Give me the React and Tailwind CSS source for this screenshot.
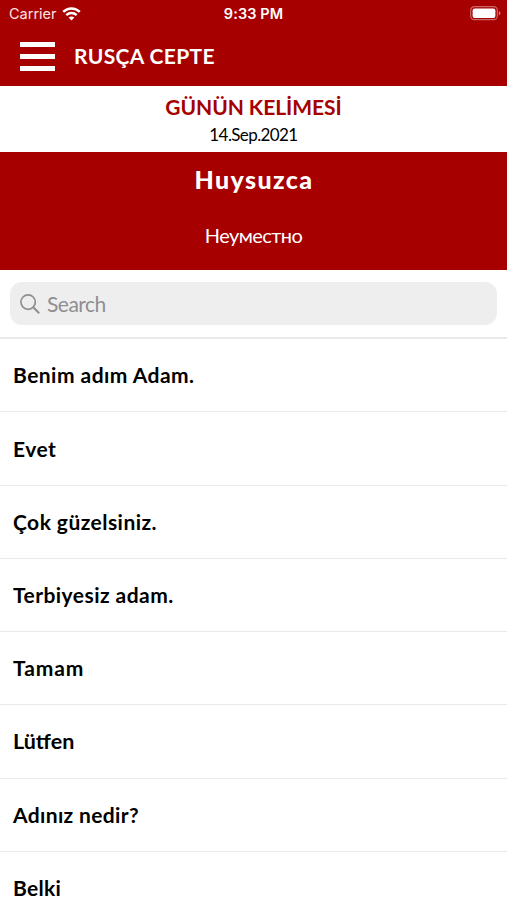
const phrases = [
  { text: "Benim adım Adam.", fit: "tracking-[0.46px]" },
  { text: "Evet", fit: "tracking-[0.5px]" },
  { text: "Çok güzelsiniz.", fit: "tracking-[0.45px]" },
  { text: "Terbiyesiz adam.", fit: "tracking-[0.45px]" },
  { text: "Tamam", fit: "tracking-[0.9px]" },
  { text: "Lütfen", fit: "text-[21.5px]" },
  { text: "Adınız nedir?", fit: "tracking-[0.35px]" },
  { text: "Belki", fit: "tracking-[0.3px]" },
];

function WifiIcon() {
  return (
    <svg width="19" height="14" viewBox="0 0 19 14" fill="none" stroke="#fff" strokeWidth="2.5">
      <path d="M1.2 4.9C5.9 .3 13.1 .3 17.8 4.9" />
      <path d="M4.3 8.1C7.3 5.3 11.7 5.3 14.7 8.1" />
      <path d="M9.5 13.6L6.6 10.6C8.2 9.1 10.8 9.1 12.4 10.6Z" fill="#fff" stroke="none" />
    </svg>
  );
}

function BatteryIcon() {
  return (
    <svg width="31" height="15" viewBox="0 0 31 15" fill="none">
      <rect x="0.7" y="0.7" width="26.6" height="13" rx="3.6" stroke="#fff" strokeOpacity=".4" strokeWidth="1.2" />
      <rect x="2.6" y="2.4" width="22.8" height="9.6" rx="2" fill="#fff" />
      <path d="M28.8 5c2.2 .8 2.2 3.6 0 4.4z" fill="#fff" fillOpacity=".5" />
    </svg>
  );
}

export default function App() {
  return (
    <div className="flex h-[900px] w-[507px] flex-col overflow-hidden bg-white font-['Lato',sans-serif] text-black">
      <header className="h-[86px] shrink-0 bg-[#a60000] text-white">
        <div className="grid h-[27px] grid-cols-3 items-center pl-[9px] pr-[6px] font-['Inter',sans-serif] text-[14.5px]">
          <div className="flex items-center gap-[5px]">
            <span className="text-[#ffe4e2]">Carrier</span>
            <WifiIcon />
          </div>
          <span className="pr-[3px] text-center font-semibold tracking-[0.1px]">9:33 PM</span>
          <div className="flex justify-end"><BatteryIcon /></div>
        </div>
        <div className="flex h-[58px] items-center pl-5">
          <div className="flex w-[35px] flex-col gap-[7px]">
            <i className="h-[5px] bg-white" />
            <i className="h-[5px] bg-white" />
            <i className="h-[5px] bg-white" />
          </div>
          <h1 className="ml-[19px] text-[21px] font-bold tracking-[0.35px]">RUSÇA CEPTE</h1>
        </div>
      </header>
      <section className="flex h-[66px] shrink-0 flex-col items-center pt-[8px]">
        <h2 className="text-[21px] font-bold leading-[26px] tracking-[-0.05px] text-[#a60000]">GÜNÜN KELİMESİ</h2>
        <p className="mt-px text-[17px] leading-[28px] tracking-[-0.6px]">14.Sep.2021</p>
      </section>
      <section className="flex h-[118px] shrink-0 flex-col items-center bg-[#a60000] pt-[11px] text-white">
        <p className="pl-px text-[25px] font-black leading-[32px] tracking-[1.4px]">Huysuzca</p>
        <p className="mt-[24px] text-[20px] leading-[32px] tracking-[-0.55px]">Неуместно</p>
      </section>
      <div className="h-[69px] shrink-0 border-b-2 border-[#eaeaea] px-[10px] pt-[12px]">
        <div className="flex h-[43px] items-center rounded-[12px] bg-[#eeeeee] pl-[10px] text-[#8e8e93]">
          <svg width="20" height="20" viewBox="0 0 20 20" fill="none" stroke="currentColor" strokeWidth="1.7">
            <circle cx="8.1" cy="8.1" r="7.2" />
            <path d="M13.2 13.2L19.2 19.2" strokeWidth="2" />
          </svg>
          <span className="ml-[7px] text-[21px] tracking-[-0.5px]">Search</span>
        </div>
      </div>
      <ul>
        {phrases.map(({ text, fit }) => (
          <li key={text} className="flex h-[73.27px] items-center border-b border-[#e9e9e9] pl-[13px] text-[21px] font-bold">
            <span className={fit}>{text}</span>
          </li>
        ))}
      </ul>
    </div>
  );
}
